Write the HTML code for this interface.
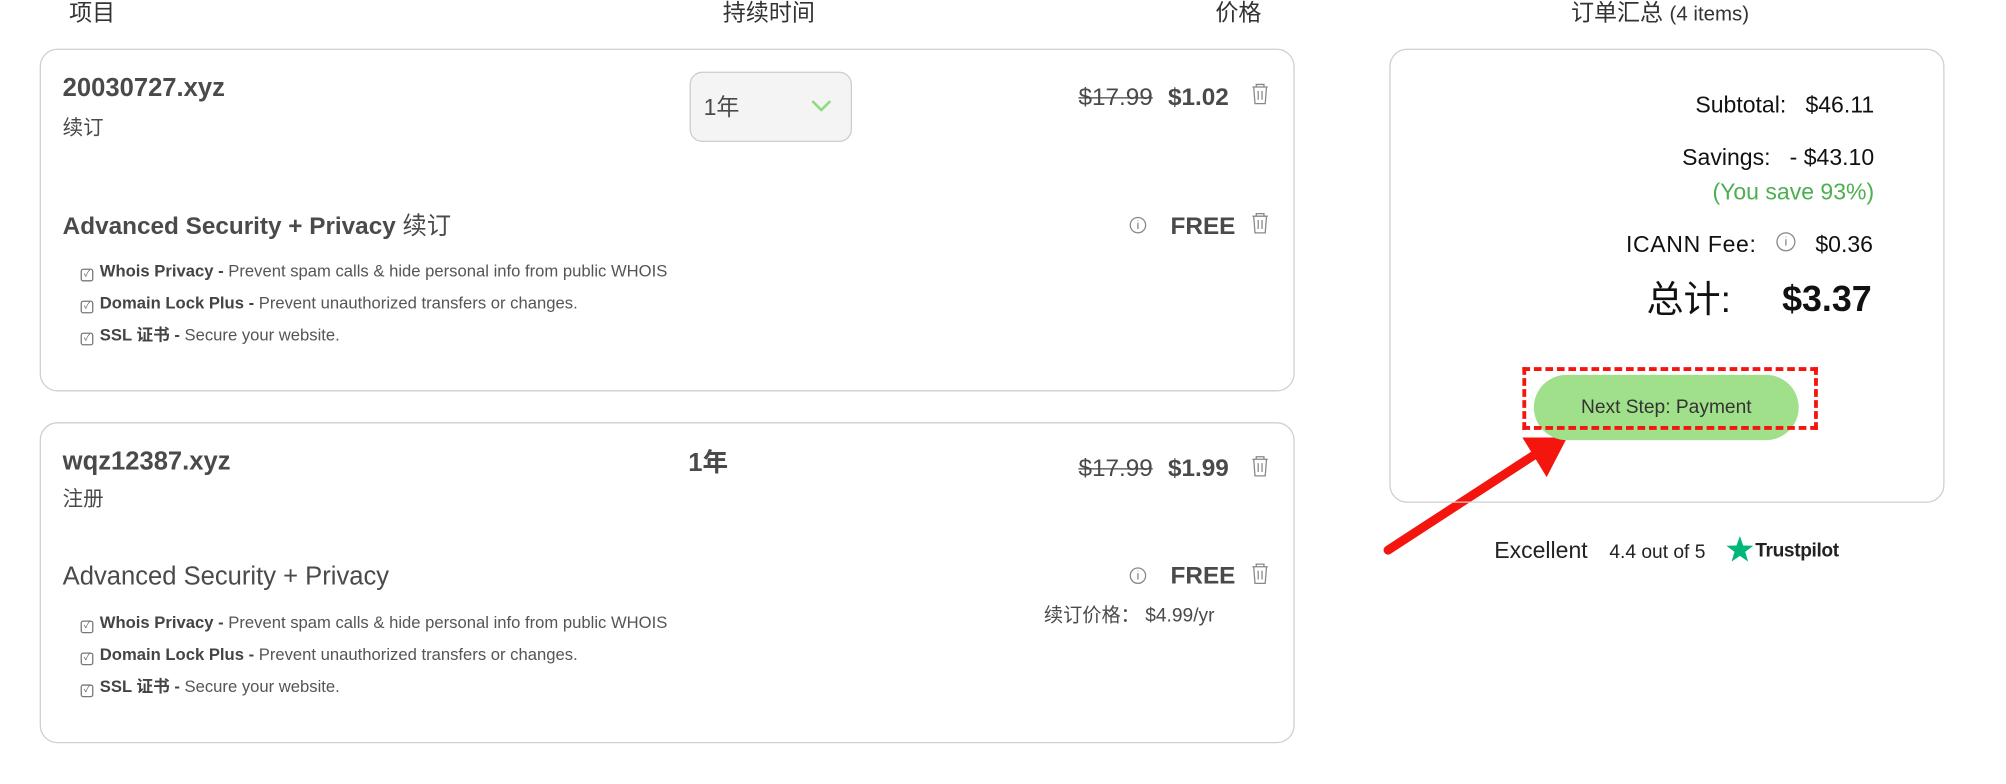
<!DOCTYPE html>
<html><head><meta charset="utf-8"><style>
html,body{margin:0;padding:0;background:#fff;overflow:hidden;width:2006px;height:784px}
#w{position:absolute;left:0;top:0;width:1568px;height:613px;transform:scale(1.2793);transform-origin:0 0;font-family:"Liberation Sans","Noto Sans CJK SC",sans-serif;color:#4a4a4a;line-height:1.2}
.a{position:absolute;white-space:nowrap}
.card{position:absolute;border:1px solid #cfcfcf;border-radius:14px;box-sizing:border-box}
.b{font-weight:bold}
.s{text-decoration:line-through;font-size:19px}
.li{font-size:13px;color:#555}
.li b{color:#444}
.cb{display:inline-block;width:8px;height:8px;border:1px solid #777;border-radius:2px;margin-right:5px;vertical-align:0;font-size:7px;line-height:8px;text-align:center}
.r{text-align:right}
</style></head><body><div id="w">
<div class="a" style="left:54px;top:0px;font-size:18px;color:#333">项目</div>
<div class="a" style="left:565px;top:0px;font-size:18px;color:#333">持续时间</div>
<div class="a" style="left:950px;top:0px;font-size:18px;color:#333">价格</div>
<div class="a" style="left:1228px;top:0px;font-size:18px;color:#333">订单汇总 <span style="font-size:16px">(4 items)</span></div>

<div class="card" style="left:31px;top:38px;width:981px;height:268px"></div>
<div class="a b" style="left:49px;top:57px;font-size:20px">20030727.xyz</div>
<div class="a" style="left:49px;top:91px;font-size:16px">续订</div>
<div class="a" style="left:539px;top:56px;width:127px;height:55px;box-sizing:border-box;border:1px solid #ccc;border-radius:10px;background:#f4f4f4"></div>
<div class="a" style="left:550px;top:74px;font-size:18px">1年</div>
<svg class="a" style="left:633px;top:77px" width="18" height="12"><path d="M2 2 L9 9 L16 2" fill="none" stroke="#8fdc7e" stroke-width="2"/></svg>
<div class="a s" style="left:843px;top:66px">$17.99</div>
<div class="a b" style="left:913px;top:66px;font-size:19px">$1.02</div>
<div class="a b" style="left:49px;top:167px;font-size:19px">Advanced Security + Privacy <span style="font-weight:normal">续订</span></div>
<div class="a b" style="left:915px;top:167px;font-size:19px">FREE</div>
<div class="a li" style="left:63px;top:204px"><span class="cb">✓</span><b>Whois Privacy -</b> Prevent spam calls &amp; hide personal info from public WHOIS</div>
<div class="a li" style="left:63px;top:229px"><span class="cb">✓</span><b>Domain Lock Plus -</b> Prevent unauthorized transfers or changes.</div>
<div class="a li" style="left:63px;top:254px"><span class="cb">✓</span><b>SSL 证书 -</b> Secure your website.</div>

<div class="card" style="left:31px;top:330px;width:981px;height:251px"></div>
<div class="a b" style="left:49px;top:349px;font-size:20px">wqz12387.xyz</div>
<div class="a" style="left:49px;top:381px;font-size:16px">注册</div>
<div class="a b" style="left:538px;top:350px;font-size:20px">1年</div>
<div class="a s" style="left:843px;top:356px">$17.99</div>
<div class="a b" style="left:913px;top:356px;font-size:19px">$1.99</div>
<div class="a" style="left:49px;top:439px;font-size:20px">Advanced Security + Privacy</div>
<div class="a b" style="left:915px;top:440px;font-size:19px">FREE</div>
<div class="a" style="left:816px;top:473px;font-size:15px">续订价格： $4.99/yr</div>
<div class="a li" style="left:63px;top:479px"><span class="cb">✓</span><b>Whois Privacy -</b> Prevent spam calls &amp; hide personal info from public WHOIS</div>
<div class="a li" style="left:63px;top:504px"><span class="cb">✓</span><b>Domain Lock Plus -</b> Prevent unauthorized transfers or changes.</div>
<div class="a li" style="left:63px;top:529px"><span class="cb">✓</span><b>SSL 证书 -</b> Secure your website.</div>

<svg class="a" style="left:0;top:0" width="1568" height="613">
<g fill="none" stroke="#888" stroke-width="1">
<g id="t"><path d="M979 68h12M982 68v-2h6v2M980 68l1 13h8l1-13M983.5 71v7M986.5 71v7"/></g>
<use href="#t" y="101"/><use href="#t" y="291"/><use href="#t" y="375"/>
<circle cx="889.5" cy="176" r="6"/><path d="M889.5 174v5M889.5 172v.5"/>
<circle cx="889.5" cy="450" r="6"/><path d="M889.5 448v5M889.5 446v.5"/>
<circle cx="1396" cy="189" r="7"/><path d="M1396 187v5M1396 185v.5"/>
</g>
<path d="M1085 430 L1208 350" stroke="#f5150f" stroke-width="7" stroke-linecap="round"/>
<path d="M1225 342 L1190 342 L1209 373 Z" fill="#f5150f"/>
<path d="M1360 419 l2.6 7.4 7.9.2-6.3 4.8 2.3 7.6-6.5-4.5-6.5 4.5 2.3-7.6-6.3-4.8 7.9-.2z" fill="#00b67a"/>
</svg>

<div class="card" style="left:1086px;top:38px;width:434px;height:355px"></div>
<div class="a r" style="right:103px;top:72px;font-size:18px;color:#111">Subtotal:&nbsp;&nbsp;&nbsp;$46.11</div>
<div class="a r" style="right:103px;top:113px;font-size:18px;color:#111">Savings:&nbsp;&nbsp;&nbsp;- $43.10</div>
<div class="a r" style="right:103px;top:140px;font-size:18px;color:#4caf50">(You save 93%)</div>
<div class="a" style="left:1271px;top:181px;font-size:18px;color:#111;letter-spacing:0.5px">ICANN Fee:</div>
<div class="a" style="left:1419px;top:181px;font-size:18px;color:#111">$0.36</div>
<div class="a" style="left:1287px;top:221px;font-size:29px;color:#111;line-height:1">总计:</div>
<div class="a b" style="left:1393px;top:220px;font-size:28px;color:#111;line-height:1">$3.37</div>
<div class="a" style="left:1199px;top:293px;width:207px;height:51px;border-radius:26px;background:#a1e08b;color:#333;font-size:15px;text-align:center;line-height:51px">Next Step: Payment</div>
<div class="a" style="left:1190px;top:287px;width:231px;height:49px;box-sizing:border-box;border:3px dashed #f5150f"></div>
<div class="a" style="left:1168px;top:420px;font-size:18px;color:#222">Excellent</div>
<div class="a" style="left:1258px;top:423px;font-size:15px;color:#222">4.4 out of 5</div>
<div class="a b" style="left:1372px;top:422px;font-size:15px;color:#222;letter-spacing:-0.3px">Trustpilot</div>
</div></body></html>
